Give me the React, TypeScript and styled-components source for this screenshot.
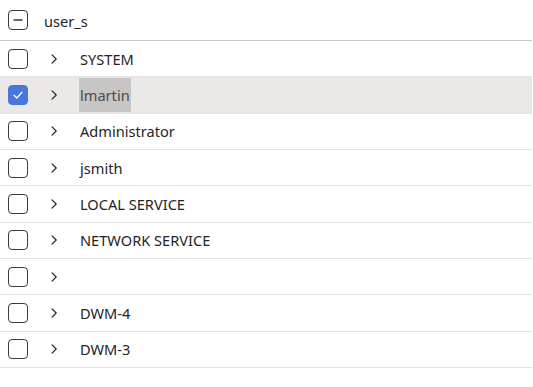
import styled, { createGlobalStyle } from 'styled-components';

const Global = createGlobalStyle`
    html, body {
        margin: 0;
        padding: 0;
        background: #ffffff;
    }
    body {
        font-family: "Noto Sans", "Open Sans", sans-serif;
        color: #242424;
    }
`

const Tree = styled.div`
    width: 532px;
    display: flex;
    flex-direction: column;
`

const HeaderRow = styled.div`
    display: flex;
    align-items: center;
    height: 40px;
    border-bottom: 1px solid #c7c7c7;
    box-sizing: content-box;
`

const Row = styled.div<{ $selected?: boolean }>`
    display: flex;
    align-items: center;
    height: 35.33px;
    border-bottom: 1px solid #e3e3e3;
    background: ${p => (p.$selected ? '#ebe9e7' : 'transparent')};
`

const Box = styled.span<{ $checked?: boolean }>`
    display: flex;
    align-items: center;
    justify-content: center;
    width: 20px;
    height: 20px;
    box-sizing: border-box;
    margin-left: 8px;
    border-radius: 4px;
    border: 1px solid ${p => (p.$checked ? '#4a76d9' : '#3a3a3a')};
    background: ${p => (p.$checked ? '#4a76d9' : '#ffffff')};
`

const Chevron = styled.span`
    display: flex;
    width: 12px;
    margin-left: 20px;
    margin-right: 20px;
`

const Label = styled.span<{ $marked?: boolean }>`
    font-size: 14.6px;
    line-height: 33px;
    padding: 1px 1px 0;
    margin-left: -1px;
    color: ${p => (p.$marked ? '#4a4a4a' : '#242424')};
    background: ${p => (p.$marked ? '#c8c6c4' : 'transparent')};
`

const HeaderLabel = styled.span`
    font-size: 14.6px;
    margin-left: 16px;
    padding-top: 1px;
`

const users = [
    'SYSTEM',
    'lmartin',
    'Administrator',
    'jsmith',
    'LOCAL SERVICE',
    'NETWORK SERVICE',
    '',
    'DWM-4',
    'DWM-3',
]

function Check({ checked }: { checked?: boolean }) {
    return (
        <Box $checked={checked}>
            {checked && (
                <svg width="12" height="12" viewBox="0 0 12 12">
                    <path d="M2 6.3 L4.8 9 L10 3.3" fill="none" stroke="#fff" strokeWidth="1.3" strokeLinecap="round" strokeLinejoin="round" />
                </svg>
            )}
        </Box>
    )
}

export default function App() {
    return (
        <Tree>
            <Global />
            <HeaderRow>
                <Box>
                    <svg width="14" height="14" viewBox="0 0 14 14">
                        <path d="M2.5 7 H11.5" stroke="#242424" strokeWidth="1.4" />
                    </svg>
                </Box>
                <HeaderLabel>user_s</HeaderLabel>
            </HeaderRow>
            {users.map((name, i) => (
                <Row key={i} $selected={name === 'lmartin'}>
                    <Check checked={name === 'lmartin'} />
                    <Chevron>
                        <svg width="12" height="12" viewBox="0 0 12 12">
                            <path d="M4 1.8 L8.2 6 L4 10.2" fill="none" stroke="#242424" strokeWidth="1.2" strokeLinecap="round" strokeLinejoin="round" />
                        </svg>
                    </Chevron>
                    {name && <Label $marked={name === 'lmartin'}>{name}</Label>}
                </Row>
            ))}
        </Tree>
    )
}
